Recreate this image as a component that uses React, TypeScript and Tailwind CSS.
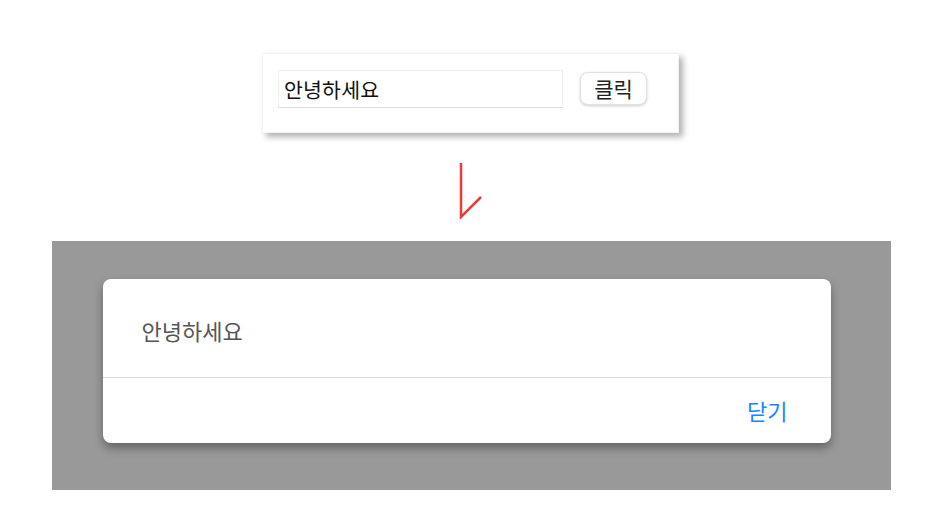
import React from "react";

export default function App() {
  const font = { fontFamily: '"Noto Sans CJK KR", "Noto Sans", sans-serif' };
  return (
    <div className="w-[941px] h-[513px] bg-white flex flex-col items-center" style={font}>
      <div className="mt-[53px] w-[417px] h-[80px] bg-white shadow-[4px_4px_6px_rgba(0,0,0,0.3)] border border-[#f3f3f3] flex items-center pl-[15px]">
        <div className="w-[285px] h-[38px] border border-[#eeeeee] border-b-[#dddddd] flex items-center pl-[5px] text-[20.5px] tracking-[0.2px] text-[#111] mt-[-8px]">
          안녕하세요
        </div>
        <button className="ml-[17px] w-[67px] h-[33px] rounded-[8px] border border-[#e2e2e2] bg-white shadow-[0_1px_3px_rgba(0,0,0,0.2)] text-[21px] text-[#222] flex items-center justify-center mt-[-9px]">
          클릭
        </button>
      </div>
      <div className="w-[941px] h-[108px] flex justify-start">
        <svg width="941" height="108" viewBox="0 0 941 108">
          <polyline points="461,30 461,84 481,64" fill="none" stroke="#ef3a3a" strokeWidth="2.5" />
        </svg>
      </div>
      <div className="w-[839px] h-[249px] bg-[#999999] ml-[1px] pt-[38px] pl-[51px]">
        <div className="w-[728px] h-[164px] bg-white rounded-[8px] shadow-[0_5px_10px_rgba(0,0,0,0.35)] flex flex-col">
          <div className="h-[99px] flex items-center pl-[39px] text-[22px] text-[#555] border-b border-[#dddddd] pt-[4px]">
            안녕하세요
          </div>
          <div className="flex-1 flex items-center justify-end pr-[43px] text-[22px] text-[#1a84ff] pb-[1px]">
            닫기
          </div>
        </div>
      </div>
    </div>
  );
}
